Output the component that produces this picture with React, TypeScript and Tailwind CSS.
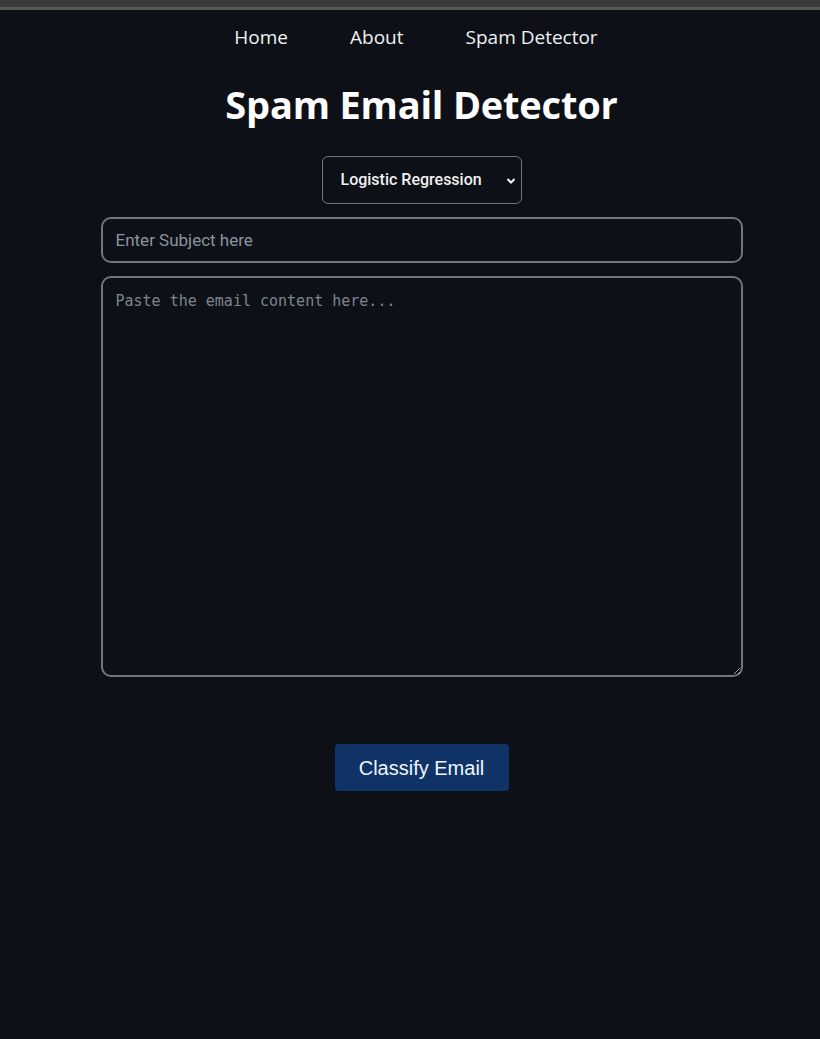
import { useState } from 'react';

export default function App() {
  const [model, setModel] = useState('lr');
  const [subject, setSubject] = useState('');
  const [body, setBody] = useState('');

  return (
    <div className="min-h-[1039px] w-[820px] bg-[#0d1117] flex flex-col">
      <div className="h-[7px] bg-[#3b3b3b]" />
      <div className="h-[3px] bg-[#565656]" />
      <nav className="flex justify-center gap-[62px] pt-[14px] pl-[12px] text-[19px] text-[#f0f0f0] font-['Open_Sans',sans-serif] leading-[26px]">
        <a className="cursor-pointer">Home</a>
        <a className="cursor-pointer">About</a>
        <a className="cursor-pointer">Spam Detector</a>
      </nav>
      <div className="flex flex-col pl-[23px]">
        <h1 className="mt-[30px] text-center text-[38px] font-bold text-white leading-[48px] font-['Open_Sans',sans-serif] tracking-[-0.2px]">
          Spam Email Detector
        </h1>
        <div className="flex justify-center mt-[28px]">
          <div className="relative">
            <select
              value={model}
              onChange={(e) => setModel(e.target.value)}
              className="appearance-none w-[200px] h-[48px] rounded-md border border-[#6e7681] bg-[#0d1117] pl-[18px] text-[16px] font-medium text-[#f0f0f0] font-['Roboto',sans-serif] outline-none"
            >
              <option value="lr">Logistic Regression</option>
              <option value="nb">Naive Bayes</option>
              <option value="svm">SVM</option>
            </select>
            <svg className="absolute right-[6px] top-[21px] pointer-events-none" width="10" height="8" viewBox="0 0 10 8">
              <path d="M1.5 2 L5 5.5 L8.5 2" fill="none" stroke="#f0f0f0" strokeWidth="2" />
            </svg>
          </div>
        </div>
        <div className="flex flex-col items-center mt-[13px] gap-[13px]">
          <input
            value={subject}
            onChange={(e) => setSubject(e.target.value)}
            placeholder="Enter Subject here"
            className="w-[642px] h-[46px] rounded-[10px] border-2 border-[#6e7681] bg-[#0d1117] px-[13px] text-[17px] text-[#e6edf3] placeholder:text-[#8b949e] font-['Roboto',sans-serif] outline-none"
          />
          <textarea
            value={body}
            onChange={(e) => setBody(e.target.value)}
            placeholder="Paste the email content here..."
            className="w-[642px] h-[401px] rounded-[10px] border-2 border-[#6e7681] bg-[#0d1117] px-[13px] py-[12px] text-[15px] text-[#e6edf3] placeholder:text-[#7d8590] font-['DejaVu_Sans_Mono',monospace] outline-none"
          />
        </div>
        <div className="flex justify-center mt-[67px]">
          <button className="w-[174px] h-[47px] rounded-[4px] bg-[#0f3366] text-[20px] text-[#f0f4ff] font-['Liberation_Sans',sans-serif]">
            Classify Email
          </button>
        </div>
      </div>
    </div>
  );
}
